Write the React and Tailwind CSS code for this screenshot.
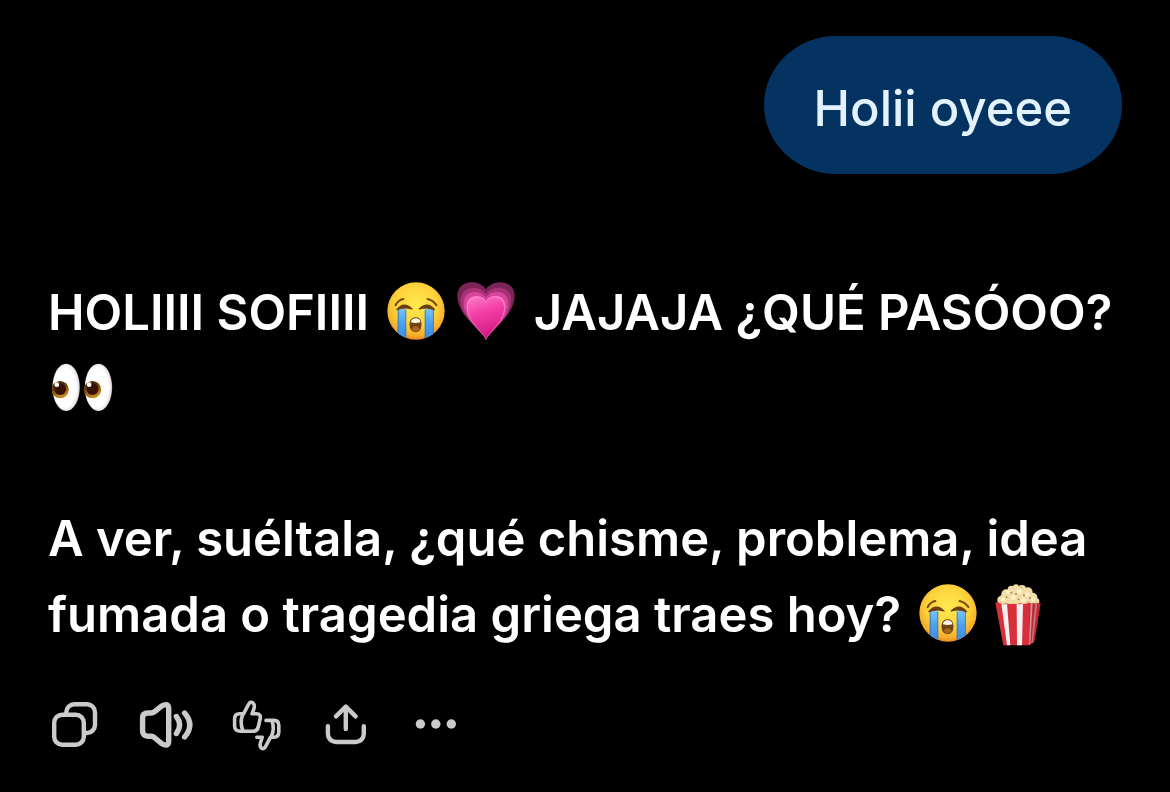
import React from 'react';

const CryingFace = ({ className }) => (
  <svg viewBox="0 0 170 170" role="img" aria-label="loudly crying face" className={className}>
    <defs>
      <radialGradient id="face" cx="0.5" cy="0.4" r="0.62">
        <stop offset="0" stopColor="#ffe94f" />
        <stop offset="0.6" stopColor="#fdd23a" />
        <stop offset="0.85" stopColor="#f7ad2b" />
        <stop offset="1" stopColor="#e5821c" />
      </radialGradient>
      <linearGradient id="tears" x1="0" y1="0" x2="0" y2="1">
        <stop offset="0" stopColor="#7cc4f8" />
        <stop offset="0.5" stopColor="#4a9fec" />
        <stop offset="1" stopColor="#3d8ae0" />
      </linearGradient>
      <clipPath id="faceClip">
        <circle cx="85" cy="85" r="84" />
      </clipPath>
    </defs>
    <circle cx="85" cy="85" r="84" fill="url(#face)" />
    <g clipPath="url(#faceClip)">
      <path d="M31 80 Q44 72 56 80 V170 H31 Z" fill="url(#tears)" />
      <path d="M111 80 Q124 72 137 80 V170 H111 Z" fill="url(#tears)" />
      <path d="M33 82 V160 M55 82 V166 M112 82 V166 M136 82 V160" stroke="#2f78c4" strokeWidth="2.5" fill="none" />
    </g>
    <path d="M29 81 Q50 56 73 79 Q50 72 29 81 Z" fill="#6b3f0c" stroke="#6b3f0c" strokeWidth="4" strokeLinejoin="round" />
    <path d="M95 79 Q118 56 139 81 Q118 72 95 79 Z" fill="#6b3f0c" stroke="#6b3f0c" strokeWidth="4" strokeLinejoin="round" />
    <path d="M25 68 Q33 53 48 50 M119 50 Q135 54 145 68" fill="none" stroke="#7d4a0d" strokeWidth="6" strokeLinecap="round" />
    <path d="M84 103 C97 103 101 113 101 124 C101 139 95 147 84 147 C73 147 66 139 66 124 C66 113 71 103 84 103 Z" fill="#704311" />
    <path d="M70 118 C71 109 76 106 84 106 C92 106 97 109 98 118 Q84 122 70 118 Z" fill="#fff8ec" />
    <path d="M72 137 Q84 123 96 137 Q91 145 84 145 Q77 145 72 137 Z" fill="#a8681e" />
  </svg>
);

const heartPath =
  'M86 174 C80 158 62 145 38 118 C12 91 0 66 0 42 C0 17 17 1 43 1 C62 1 78 9 86 22 C94 9 110 1 129 1 C155 1 172 17 172 42 C172 66 160 91 134 118 C110 145 92 158 86 174 Z';

const GrowingHeart = ({ className }) => (
  <svg viewBox="0 0 172 174" role="img" aria-label="growing heart" className={className}>
    <defs>
      <linearGradient id="heart" x1="0" y1="0" x2="0.3" y2="1">
        <stop offset="0" stopColor="#ff7cc8" />
        <stop offset="0.4" stopColor="#f542a8" />
        <stop offset="1" stopColor="#d21a80" />
      </linearGradient>
    </defs>
    <path d={heartPath} fill="#7a2457" />
    <path d={heartPath} transform="translate(10 16) scale(0.884 0.91)" fill="#a83277" />
    <path d={heartPath} transform="translate(19 29) scale(0.779 0.83)" fill="#d8469b" />
    <path d={heartPath} transform="translate(28 41) scale(0.674 0.76)" fill="#ff7fc9" />
    <path d={heartPath} transform="translate(32 46) scale(0.628 0.73)" fill="url(#heart)" />
  </svg>
);

const Eyes = ({ className }) => (
  <svg viewBox="0 0 182 144" role="img" aria-label="eyes" className={className}>
    <defs>
      <radialGradient id="eyeball" cx="0.45" cy="0.5" r="0.55">
        <stop offset="0.75" stopColor="#ffffff" />
        <stop offset="0.92" stopColor="#e9e4e6" />
        <stop offset="1" stopColor="#a9a3a6" />
      </radialGradient>
      <linearGradient id="iris" x1="0" y1="0" x2="0.4" y2="1">
        <stop offset="0.3" stopColor="#57300e" />
        <stop offset="1" stopColor="#c98c1c" />
      </linearGradient>
    </defs>
    <ellipse cx="42" cy="73" rx="41" ry="71" fill="url(#eyeball)" />
    <ellipse cx="139" cy="73" rx="41" ry="71" fill="url(#eyeball)" />
    <circle cx="24" cy="80" r="26" fill="url(#iris)" />
    <circle cx="121" cy="80" r="26" fill="url(#iris)" />
    <circle cx="24" cy="78" r="18" fill="#371307" />
    <circle cx="121" cy="78" r="18" fill="#371307" />
    <circle cx="14" cy="65" r="7" fill="#ffffff" />
    <circle cx="111" cy="65" r="7" fill="#ffffff" />
  </svg>
);

const Popcorn = ({ className }) => (
  <svg viewBox="0 0 136 186" role="img" aria-label="popcorn" className={className}>
    <g fill="#f3dda6">
      <circle cx="18" cy="48" r="12" />
      <circle cx="32" cy="30" r="14" />
      <circle cx="48" cy="16" r="11" />
      <circle cx="62" cy="10" r="9" />
      <circle cx="80" cy="15" r="12" />
      <circle cx="98" cy="24" r="14" />
      <circle cx="112" cy="40" r="14" />
      <circle cx="122" cy="52" r="10" />
      <path d="M16 34 L60 10 L104 24 L128 60 H8 Z" />
    </g>
    <g fill="#fbf0cd">
      <circle cx="38" cy="24" r="7" />
      <circle cx="72" cy="22" r="8" />
      <circle cx="96" cy="32" r="7" />
      <circle cx="54" cy="40" r="8" />
      <circle cx="24" cy="46" r="6" />
      <circle cx="84" cy="48" r="7" />
      <circle cx="114" cy="46" r="6" />
    </g>
    <g fill="#b98443">
      <circle cx="48" cy="26" r="3" />
      <circle cx="62" cy="30" r="3" />
      <circle cx="86" cy="34" r="3" />
      <circle cx="34" cy="40" r="3" />
      <circle cx="70" cy="46" r="3" />
      <circle cx="104" cy="42" r="3" />
      <circle cx="78" cy="10" r="2" />
      <circle cx="98" cy="54" r="2" />
    </g>
    <path d="M0 56 Q8 52 14 58 Q24 62 32 58 Q42 62 52 59 Q62 62 74 58 Q86 62 96 58 L102 56 Q108 60 112 57 Q118 60 122 56 L136 58 L117 174 L101 184 H24 Z" fill="#d8303a" />
    <path d="M18 59 Q26 62 35 59 L45 184 H35 Z" fill="#f7efef" />
    <path d="M64 60 Q74 62 83 60 L80 184 H65 Z" fill="#f7efef" />
    <path d="M106 59 L112 58 L105 180 L101 184 Z" fill="#e9c9ca" />
    <path d="M120 58 L126 57 L112 176 L108 178 Z" fill="#d9a5a8" />
    <path d="M102 58 L136 58 L117 174 L101 184 Z" fill="#8f1620" opacity="0.3" />
  </svg>
);

const CopyIcon = () => (
  <svg viewBox="0 0 56 56" fill="none" stroke="currentColor" strokeWidth="4.4" strokeLinecap="round" strokeLinejoin="round" className="size-14">
    <rect x="6.2" y="18.7" width="29.6" height="30" rx="8" />
    <path d="M18.3 18 V16.2 a8 8 0 0 1 8-8 H39 a8 8 0 0 1 8 8 V29 a8 8 0 0 1-8 8 H37" />
  </svg>
);

const SpeakerIcon = () => (
  <svg viewBox="0 0 56 56" fill="none" stroke="currentColor" strokeWidth="5.4" strokeLinecap="round" strokeLinejoin="round" className="size-14">
    <path d="M10 17 H13 Q15 17 17 15.4 L23.5 10.2 Q30.7 6 30.7 13 V45 Q30.7 51.5 23.5 47.5 L17 42 Q15 40.2 13 40.2 H10 Q4.6 40.2 4.6 35 V22 Q4.6 17 10 17 Z" />
    <path d="M38.4 20.5 Q44.8 28.8 38.4 37.5" />
    <path d="M46.6 17 Q57 29 46.6 41" />
  </svg>
);

const ThumbsIcon = () => (
  <svg viewBox="0 0 56 56" fill="none" stroke="currentColor" strokeWidth="3.6" strokeLinecap="round" strokeLinejoin="round" className="size-14">
    <path d="M15.5 17.8 L20.5 8.5 Q22.4 4.9 25 7 Q27 8.8 26 12.5 L24 17.8 H28.5 Q33.2 18 32.2 22.5 L30.4 30.5 Q29.4 35.3 25 35.3 H12.5 Q6.6 35.3 6.6 30 V23 Q6.6 17.8 11.5 17.8 H15.5" />
    <path d="M14.5 19 Q11.6 26 14.8 34.5" />
    <path d="M38 24.4 H46 Q50.8 24.4 50.8 29.5 V36 Q50.8 41.2 46 41.2 H42.5 L37.8 50.2 Q36 53.8 33.4 52 Q31.4 50.4 32.4 47 L34.2 41.2 H28.8" />
    <path d="M44 25 Q46.8 33 43.4 40.5" />
  </svg>
);

const ShareIcon = () => (
  <svg viewBox="0 0 56 56" fill="none" stroke="currentColor" strokeWidth="4.4" strokeLinecap="round" strokeLinejoin="round" className="size-14">
    <path d="M9.9 30.2 V38 a8 8 0 0 0 8 8 H37.8 a8 8 0 0 0 8-8 V30.2" />
    <path d="M27.8 33 V10.8 M18 20.4 L27.8 10.6 L37.6 20.4" />
  </svg>
);

const MoreIcon = () => (
  <svg viewBox="0 0 56 56" fill="currentColor" className="size-14">
    <circle cx="12.4" cy="28" r="4.7" />
    <circle cx="27.8" cy="28" r="4.7" />
    <circle cx="43.3" cy="28" r="4.7" />
  </svg>
);

const actions = [
  { label: 'Copiar', Icon: CopyIcon },
  { label: 'Leer en voz alta', Icon: SpeakerIcon },
  { label: 'Valorar respuesta', Icon: ThumbsIcon },
  { label: 'Compartir', Icon: ShareIcon },
  { label: 'Más opciones', Icon: MoreIcon },
];

const App = () => {
  return (
    <main
      lang="es"
      className="min-h-screen bg-black px-12 pt-9 font-['Inter',sans-serif] text-[49px] leading-[76px] font-medium text-white"
    >
      {/* User message */}
      <div className="flex justify-end">
        <p className="rounded-[72px/69px] bg-[#043362] px-[50px] pt-[35px] pb-[27px] text-[#e3f2ff]">
          Holii oyeee
        </p>
      </div>

      {/* Assistant reply */}
      <div className="mt-[101px] space-y-[74px] font-semibold whitespace-nowrap">
        <p>
          HOLIIII SOFIIII <CryingFace className="mx-1.5 inline-block size-[58px] align-[-10px]" />
          <GrowingHeart className="mx-1.5 inline-block size-[58px] align-[-10px]" /> JAJAJA ¿QUÉ PASÓOO?
          <br />
          <Eyes className="mx-1 inline-block h-12 w-[61px] align-[-5px]" />
        </p>
        <p>
          A ver, suéltala, ¿qué chisme, problema, idea
          <br />
          fumada o tragedia griega traes hoy?{' '}
          <CryingFace className="mx-1.5 inline-block size-[58px] align-[-10px]" />
          <Popcorn className="mx-3 inline-block h-[62px] w-[46px] align-[-14px]" />
        </p>
      </div>

      {/* Reply actions */}
      <div className="mt-[43px] flex gap-[34px] text-[#cbcbcb]">
        {actions.map(({ label, Icon }) => (
          <button key={label} type="button" aria-label={label} className="size-14">
            <Icon />
          </button>
        ))}
      </div>
    </main>
  );
};

export default App;
